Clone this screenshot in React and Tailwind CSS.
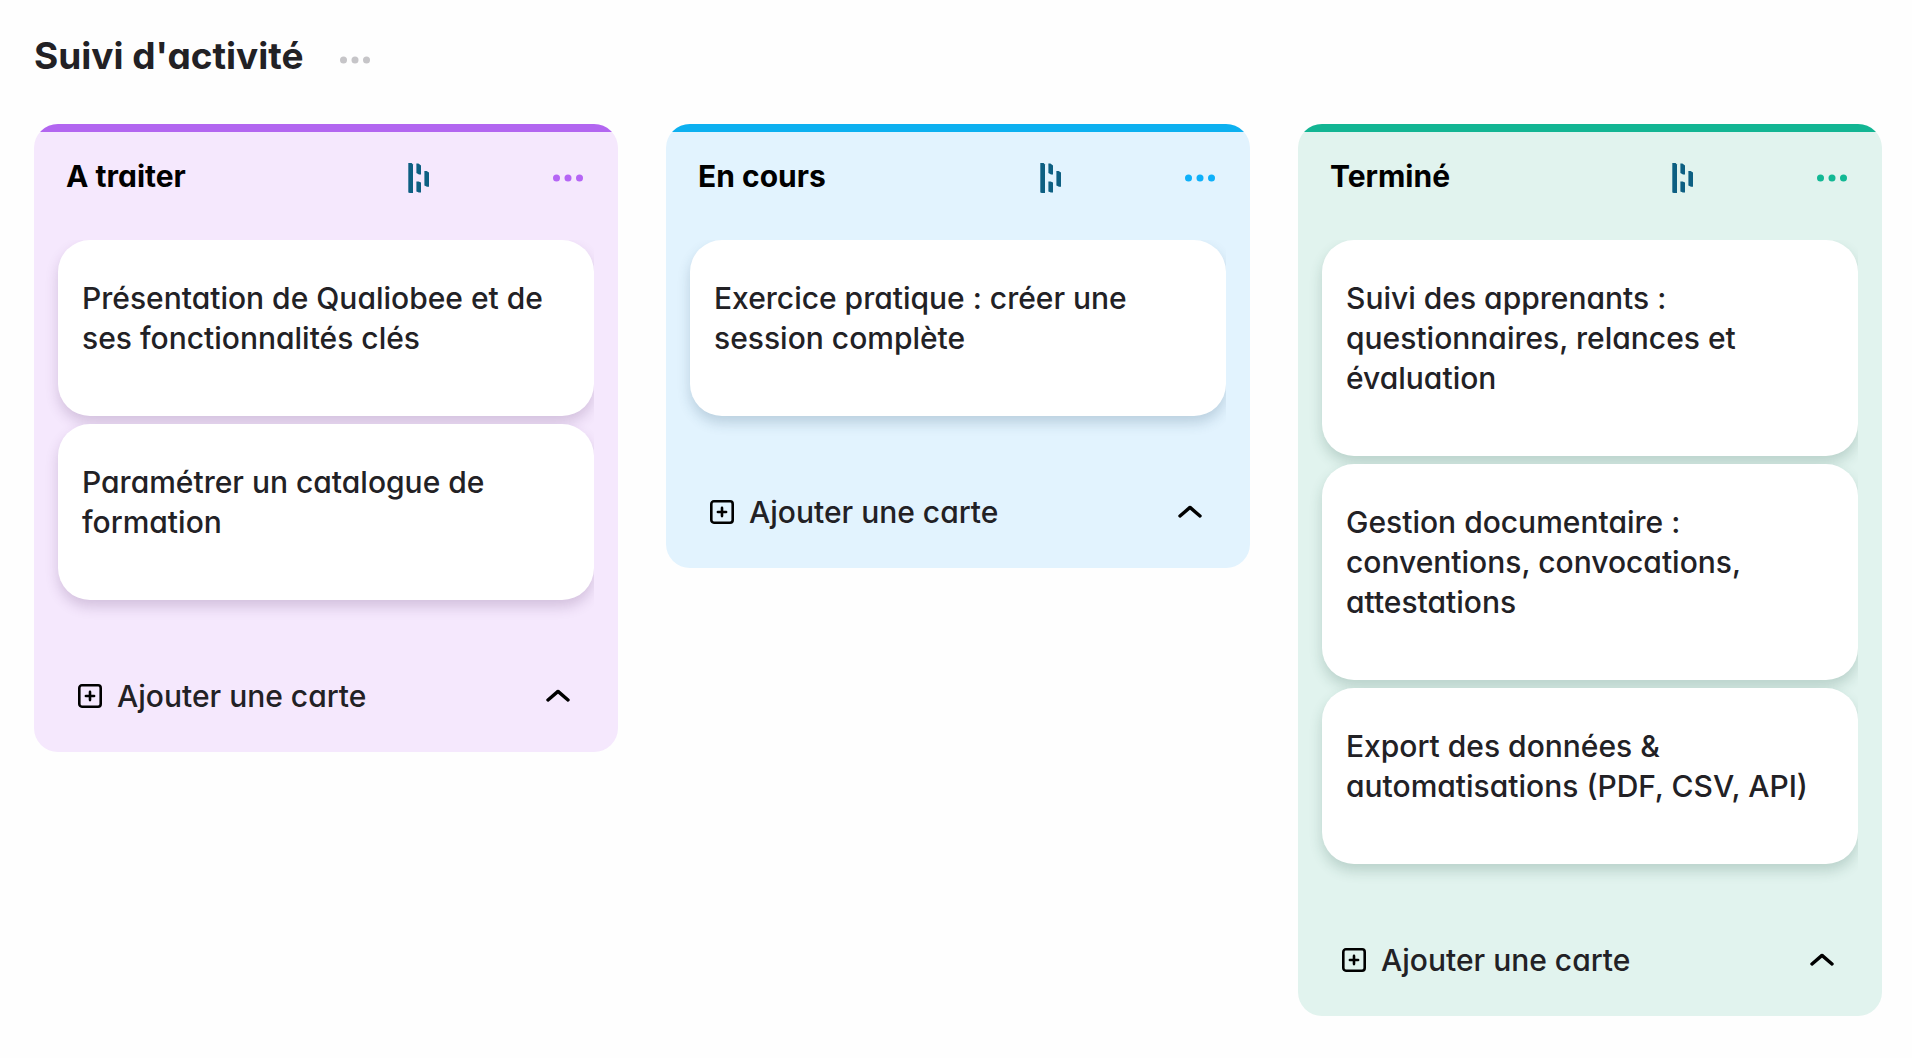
const columns = [
  {
    title: "A traiter",
    bar: "bg-[#b266f0]",
    body: "bg-[#f5e8fd]",
    dots: "text-[#b565f5]",
    shadow: "shadow-[0_7px_13px_rgba(80,40,100,0.2)]",
    cards: [
      "Présentation de Qualiobee et de ses fonctionnalités clés",
      "Paramétrer un catalogue de formation",
    ],
  },
  {
    title: "En cours",
    bar: "bg-[#0cb0f0]",
    body: "bg-[#e2f3fe]",
    dots: "text-[#0eb0fa]",
    shadow: "shadow-[0_7px_13px_rgba(30,70,100,0.2)]",
    cards: ["Exercice pratique : créer une session complète"],
  },
  {
    title: "Terminé",
    bar: "bg-[#12b593]",
    body: "bg-[#e1f3ee]",
    dots: "text-[#12b894]",
    shadow: "shadow-[0_7px_13px_rgba(30,80,65,0.2)]",
    cards: [
      "Suivi des apprenants : questionnaires, relances et évaluation",
      "Gestion documentaire : conventions, convocations, attestations",
      "Export des données & automatisations (PDF, CSV, API)",
    ],
  },
];

function Dots() {
  return (
    <svg width="30" height="8" viewBox="0 0 30 8" fill="currentColor" aria-hidden="true">
      <circle cx="3.5" cy="4" r="3.5" />
      <circle cx="15" cy="4" r="3.5" />
      <circle cx="26.5" cy="4" r="3.5" />
    </svg>
  );
}

function Logo() {
  return (
    <svg width="22" height="32" viewBox="0 0 22 32" fill="#0d5f82" aria-hidden="true">
      <path d="M0.3 1 H3.6 L5 2.4 V31 H1.8 L0.3 30.4 Z" />
      <path d="M8.4 1.6 H10.4 L13 3.4 V12.4 H11 L8.4 11 Z" />
      <path d="M8.4 19.6 H10.6 L13 20.6 V30.6 H10.8 L8.4 29.4 Z" />
      <path d="M16.4 9 H18.6 L21 10.6 V24.8 H19 L16.4 23.6 Z" />
    </svg>
  );
}

function PlusSquare() {
  return (
    <svg width="24" height="24" viewBox="0 0 24 24" fill="none" stroke="#000" strokeLinecap="round" aria-hidden="true">
      <rect x="1.3" y="1.3" width="21.4" height="21.4" rx="2.6" strokeWidth="2.6" />
      <path d="M12 7.9V16.1M7.9 12H16.1" strokeWidth="2.6" />
    </svg>
  );
}

function ChevronUp() {
  return (
    <svg width="24" height="14" viewBox="0 0 24 14" fill="none" stroke="#000" strokeWidth="3.4" strokeLinecap="round" strokeLinejoin="round" aria-hidden="true">
      <path d="M2 11L12 2.4L22 11" />
    </svg>
  );
}

function Column({ title, bar, body, dots, shadow, cards }) {
  return (
    <section className={`min-w-0 flex-1 overflow-hidden rounded-3xl ${body}`}>
      <div className={`h-2 ${bar}`} />
      <header className="flex h-[92px] items-center pr-[35px] pl-8">
        <h2 className="flex-1 pb-1 text-3xl leading-10 font-bold text-black">{title}</h2>
        <Logo />
        <button type="button" aria-label={`Options de ${title}`} className={`ml-[123px] ${dots}`}>
          <Dots />
        </button>
      </header>
      <ul className="mt-4 mr-6 flex flex-col gap-2 overflow-hidden pb-12 pl-6">
        {cards.map((card) => (
          <li
            key={card}
            className={`rounded-[32px] bg-white px-6 pt-[38px] pb-[58px] text-3xl leading-10 font-medium text-[#222125] ${shadow}`}
          >
            {card}
          </li>
        ))}
      </ul>
      <footer className="flex items-center justify-between pt-7 pr-12 pb-9 pl-11">
        <button type="button" className="flex items-center gap-[15px] text-3xl leading-10 font-medium text-[#222125]">
          <PlusSquare />
          Ajouter une carte
        </button>
        <button type="button" aria-label="Replier">
          <ChevronUp />
        </button>
      </footer>
    </section>
  );
}

export default function App() {
  return (
    <main className="min-h-screen bg-[#fefefe] pt-8 pr-[30px] pb-10 pl-[34px] font-['Inter',sans-serif] [font-feature-settings:'cv11']">
      <div className="mb-11 flex h-12 items-center gap-9">
        <h1 className="text-[37px] font-bold text-[#222125]">Suivi d'activité</h1>
        <button type="button" aria-label="Options du tableau" className="pt-2 text-[#c6c5c8]">
          <Dots />
        </button>
      </div>
      <div className="flex items-start gap-12">
        {columns.map((column) => (
          <Column key={column.title} {...column} />
        ))}
      </div>
    </main>
  );
}
